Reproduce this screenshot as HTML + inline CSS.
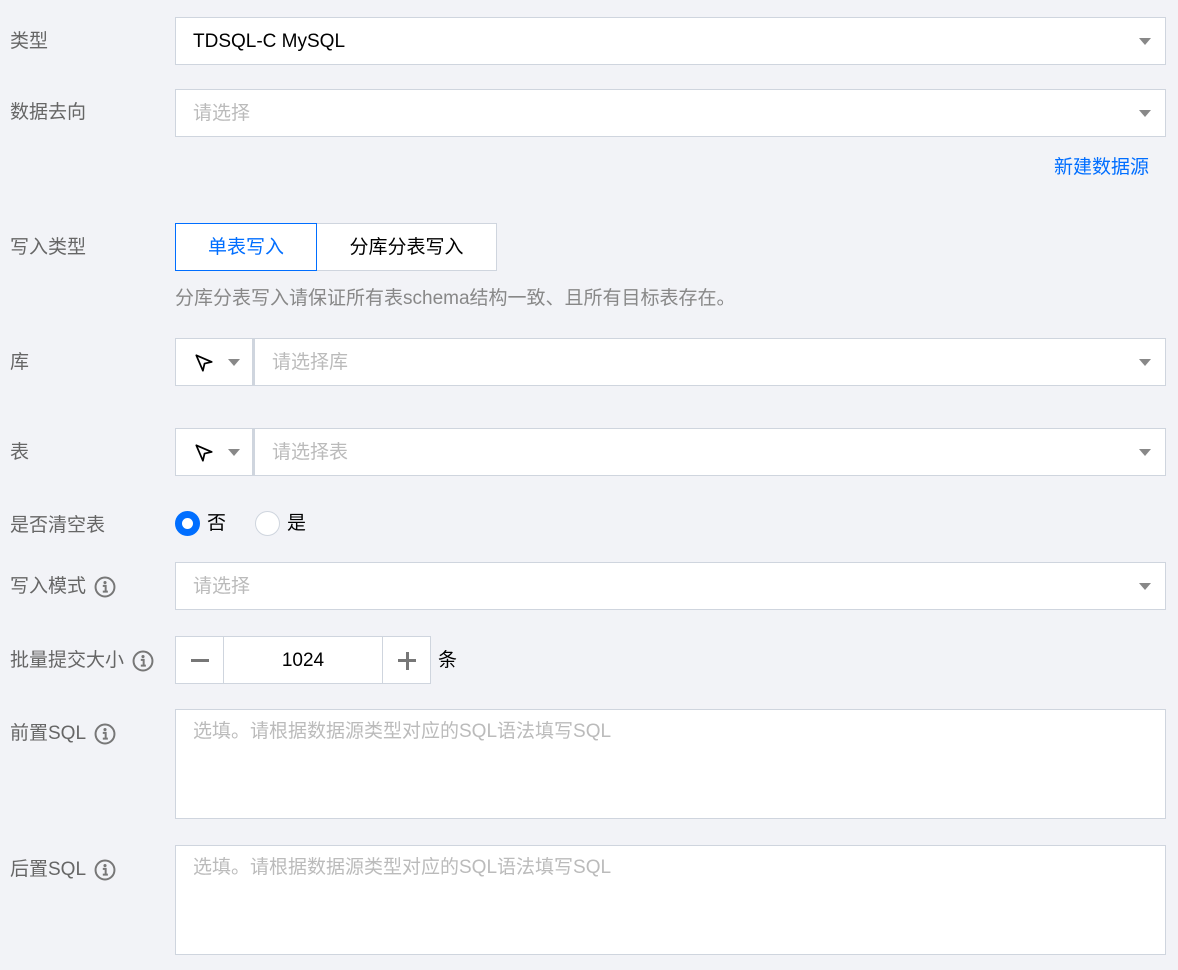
<!DOCTYPE html>
<html><head><meta charset="utf-8"><style>
*{box-sizing:border-box;margin:0;padding:0}
body{width:1178px;height:970px;background:#f2f3f7;font-family:"Liberation Sans","Noto Sans CJK SC",sans-serif;font-size:19px;color:#000;position:relative;overflow:hidden}
.a{position:absolute}
.lbl{position:absolute;left:10px;color:#666;font-size:19px;line-height:24px;display:flex;align-items:center;gap:8px}
.box{position:absolute;background:#fff;border:1px solid #cfd5de}
.ph{color:#bbb}
.tri{position:absolute;right:14px;top:50%;margin-top:-3px;width:0;height:0;border-left:6px solid transparent;border-right:6px solid transparent;border-top:7px solid #888}
.txt{position:absolute;left:17px;top:50%;transform:translateY(-50%);line-height:24px;margin-top:1px}
.info{width:22px;height:22px}
</style></head><body>
<svg width="0" height="0" style="position:absolute"><defs>
<symbol id="i" viewBox="0 0 20 20"><circle cx="10" cy="10" r="8.6" fill="none" stroke="#777" stroke-width="1.8"/><circle cx="10" cy="6" r="1.4" fill="#777"/><path d="M8 9h2.6v5.2M8 14.2h4.6" stroke="#777" stroke-width="1.8" fill="none"/></symbol>
<symbol id="c" viewBox="0 0 20 20"><path d="M3 3 L17 9 L10.5 10.5 L9 17 Z" fill="none" stroke="#000" stroke-width="1.6" stroke-linejoin="round"/></symbol>
</defs></svg>

<div class="lbl" style="top:30px">类型</div>
<div class="box" style="left:175px;top:17px;width:991px;height:48px"><span class="txt">TDSQL-C MySQL</span><i class="tri"></i></div>

<div class="lbl" style="top:101px">数据去向</div>
<div class="box" style="left:175px;top:89px;width:991px;height:48px"><span class="txt ph">请选择</span><i class="tri"></i></div>

<div class="a" style="left:1054px;top:156px;color:#006eff;line-height:24px">新建数据源</div>

<div class="lbl" style="top:236px">写入类型</div>
<div class="box" style="left:175px;top:223px;width:142px;height:48px;border-color:#006eff;color:#006eff;text-align:center;line-height:47px;z-index:2">单表写入</div>
<div class="box" style="left:316px;top:223px;width:181px;height:48px;text-align:center;line-height:47px">分库分表写入</div>
<div class="a" style="left:175px;top:287px;color:#888;line-height:24px">分库分表写入请保证所有表schema结构一致、且所有目标表存在。</div>

<div class="lbl" style="top:351px">库</div>
<div class="box" style="left:175px;top:338px;width:78px;height:48px"><svg class="a" style="left:17px;top:13px" width="22" height="22"><use href="#c"/></svg><i class="tri" style="right:12px"></i></div>
<div class="box" style="left:253px;top:338px;width:913px;height:48px;border-left:2px solid #cfd5de"><span class="txt ph">请选择库</span><i class="tri"></i></div>

<div class="lbl" style="top:441px">表</div>
<div class="box" style="left:175px;top:428px;width:78px;height:48px"><svg class="a" style="left:17px;top:13px" width="22" height="22"><use href="#c"/></svg><i class="tri" style="right:12px"></i></div>
<div class="box" style="left:253px;top:428px;width:913px;height:48px;border-left:2px solid #cfd5de"><span class="txt ph">请选择表</span><i class="tri"></i></div>

<div class="lbl" style="top:514px">是否清空表</div>
<div class="a" style="left:175px;top:511px;width:25px;height:25px;border-radius:50%;border:7px solid #006eff;background:#fff"></div>
<div class="a" style="left:207px;top:512px;line-height:24px">否</div>
<div class="a" style="left:255px;top:511px;width:25px;height:25px;border-radius:50%;border:1px solid #cfd5de;background:#fff"></div>
<div class="a" style="left:287px;top:512px;line-height:24px">是</div>

<div class="lbl" style="top:575px">写入模式 <svg class="info"><use href="#i"/></svg></div>
<div class="box" style="left:175px;top:562px;width:991px;height:48px"><span class="txt ph">请选择</span><i class="tri"></i></div>

<div class="lbl" style="top:649px">批量提交大小 <svg class="info"><use href="#i"/></svg></div>
<div class="box" style="left:175px;top:636px;width:49px;height:48px"><div class="a" style="left:15px;top:22px;width:18px;height:3px;background:#777"></div></div>
<div class="box" style="left:223px;top:636px;width:160px;height:48px;text-align:center;line-height:47px">1024</div>
<div class="box" style="left:382px;top:636px;width:49px;height:48px"><div class="a" style="left:15px;top:22px;width:18px;height:3px;background:#777"></div><div class="a" style="left:22.5px;top:14.5px;width:3px;height:18px;background:#777"></div></div>
<div class="a" style="left:438px;top:649px;line-height:24px">条</div>

<div class="lbl" style="top:722px">前置SQL <svg class="info"><use href="#i"/></svg></div>
<div class="box" style="left:175px;top:709px;width:991px;height:110px"><span class="a ph" style="left:17px;top:10px;line-height:24px">选填。请根据数据源类型对应的SQL语法填写SQL</span></div>

<div class="lbl" style="top:858px">后置SQL <svg class="info"><use href="#i"/></svg></div>
<div class="box" style="left:175px;top:845px;width:991px;height:110px"><span class="a ph" style="left:17px;top:10px;line-height:24px">选填。请根据数据源类型对应的SQL语法填写SQL</span></div>
</body></html>
